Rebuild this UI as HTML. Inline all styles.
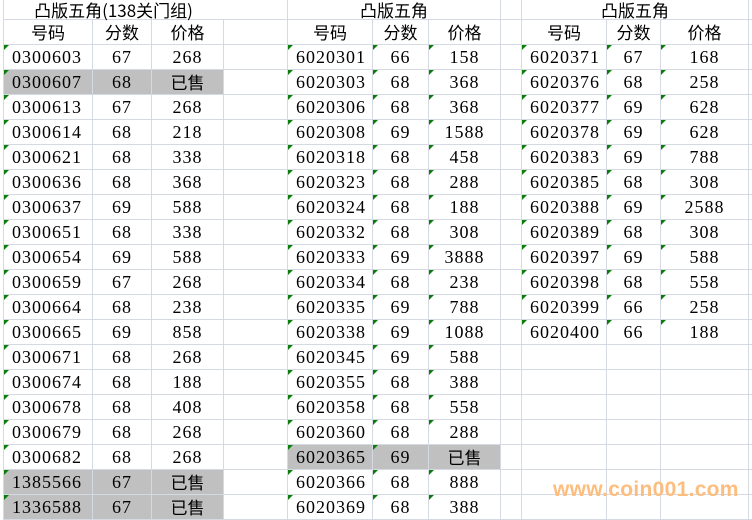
<!DOCTYPE html>
<html><head><meta charset="utf-8"><style>
body{margin:0;width:752px;height:519px;overflow:hidden;background:#fff;position:relative}
table{position:absolute;left:3px;top:-1px;width:775px;border-collapse:collapse;table-layout:fixed;font-family:"Liberation Serif","Noto Sans CJK SC",serif;font-size:18px;color:#000;letter-spacing:1px}
td{border:1px solid #d4d9e4;height:24px;padding:0;text-align:center;white-space:nowrap;overflow:visible;position:relative;line-height:24px}
tr.t td{height:19px;line-height:19px}
td.c{text-align:left;padding-left:8px}
td.g::before{content:"";position:absolute;left:0;top:0;border-top:5px solid #0a7d0a;border-right:5px solid transparent}
.h{font-family:"Noto Sans CJK SC",sans-serif;font-size:17px;letter-spacing:0}
.gr{background:#c0c0c0}
.wm{position:absolute;left:553px;top:478px;font:bold 21px "Liberation Sans",sans-serif;color:#fcbd7e;letter-spacing:0.3px}
</style></head><body>
<table>
<colgroup><col style="width:89px"><col style="width:59px"><col style="width:72px"><col style="width:64px"><col style="width:85px"><col style="width:56px"><col style="width:72px"><col style="width:21px"><col style="width:85px"><col style="width:54px"><col style="width:88px"><col style="width:30px"></colgroup>
<tr class="t"><td colspan="3" class="h" style="border-right-color:transparent">凸版五角(138关门组)</td><td></td><td colspan="3" class="h">凸版五角</td><td></td><td colspan="3" class="h">凸版五角</td><td></td></tr>
<tr><td class="h">号码</td><td class="h">分数</td><td class="h">价格</td><td></td><td class="h">号码</td><td class="h">分数</td><td class="h">价格</td><td></td><td class="h">号码</td><td class="h">分数</td><td class="h">价格</td><td></td></tr>
<tr><td class="c g">0300603</td><td>67</td><td>268</td><td></td><td class="c g">6020301</td><td class="g">66</td><td class="g">158</td><td></td><td class="c g">6020371</td><td class="g">67</td><td class="g">168</td><td></td></tr>
<tr><td class="c g gr">0300607</td><td class="gr">68</td><td class="gr h">已售</td><td></td><td class="c g">6020303</td><td class="g">68</td><td class="g">368</td><td></td><td class="c g">6020376</td><td class="g">68</td><td class="g">258</td><td></td></tr>
<tr><td class="c g">0300613</td><td>67</td><td>268</td><td></td><td class="c g">6020306</td><td class="g">68</td><td class="g">368</td><td></td><td class="c g">6020377</td><td class="g">69</td><td class="g">628</td><td></td></tr>
<tr><td class="c g">0300614</td><td>68</td><td>218</td><td></td><td class="c g">6020308</td><td class="g">69</td><td class="g">1588</td><td></td><td class="c g">6020378</td><td class="g">69</td><td class="g">628</td><td></td></tr>
<tr><td class="c g">0300621</td><td>68</td><td>338</td><td></td><td class="c g">6020318</td><td class="g">68</td><td class="g">458</td><td></td><td class="c g">6020383</td><td class="g">69</td><td class="g">788</td><td></td></tr>
<tr><td class="c g">0300636</td><td>68</td><td>368</td><td></td><td class="c g">6020323</td><td class="g">68</td><td class="g">288</td><td></td><td class="c g">6020385</td><td class="g">68</td><td class="g">308</td><td></td></tr>
<tr><td class="c g">0300637</td><td>69</td><td>588</td><td></td><td class="c g">6020324</td><td class="g">68</td><td class="g">188</td><td></td><td class="c g">6020388</td><td class="g">69</td><td class="g">2588</td><td></td></tr>
<tr><td class="c g">0300651</td><td>68</td><td>338</td><td></td><td class="c g">6020332</td><td class="g">68</td><td class="g">308</td><td></td><td class="c g">6020389</td><td class="g">68</td><td class="g">308</td><td></td></tr>
<tr><td class="c g">0300654</td><td>69</td><td>588</td><td></td><td class="c g">6020333</td><td class="g">69</td><td class="g">3888</td><td></td><td class="c g">6020397</td><td class="g">69</td><td class="g">588</td><td></td></tr>
<tr><td class="c g">0300659</td><td>67</td><td>268</td><td></td><td class="c g">6020334</td><td class="g">68</td><td class="g">238</td><td></td><td class="c g">6020398</td><td class="g">68</td><td class="g">558</td><td></td></tr>
<tr><td class="c g">0300664</td><td>68</td><td>238</td><td></td><td class="c g">6020335</td><td class="g">69</td><td class="g">788</td><td></td><td class="c g">6020399</td><td class="g">66</td><td class="g">258</td><td></td></tr>
<tr><td class="c g">0300665</td><td>69</td><td>858</td><td></td><td class="c g">6020338</td><td class="g">69</td><td class="g">1088</td><td></td><td class="c g">6020400</td><td class="g">66</td><td class="g">188</td><td></td></tr>
<tr><td class="c g">0300671</td><td>68</td><td>268</td><td></td><td class="c g">6020345</td><td class="g">69</td><td class="g">588</td><td></td><td></td><td></td><td></td><td></td></tr>
<tr><td class="c g">0300674</td><td>68</td><td>188</td><td></td><td class="c g">6020355</td><td class="g">68</td><td class="g">388</td><td></td><td></td><td></td><td></td><td></td></tr>
<tr><td class="c g">0300678</td><td>68</td><td>408</td><td></td><td class="c g">6020358</td><td class="g">68</td><td class="g">558</td><td></td><td></td><td></td><td></td><td></td></tr>
<tr><td class="c g">0300679</td><td>68</td><td>268</td><td></td><td class="c g">6020360</td><td class="g">68</td><td class="g">288</td><td></td><td></td><td></td><td></td><td></td></tr>
<tr><td class="c g">0300682</td><td>68</td><td>268</td><td></td><td class="c g gr">6020365</td><td class="g gr">69</td><td class="gr h">已售</td><td></td><td></td><td></td><td></td><td></td></tr>
<tr><td class="c g gr">1385566</td><td class="gr">67</td><td class="gr h">已售</td><td></td><td class="c g">6020366</td><td class="g">68</td><td class="g">888</td><td></td><td></td><td></td><td></td><td></td></tr>
<tr><td class="c g gr">1336588</td><td class="gr">67</td><td class="gr h">已售</td><td></td><td class="c g">6020369</td><td class="g">68</td><td class="g">388</td><td></td><td></td><td></td><td></td><td></td></tr>
</table>
<div class="wm">www.coin001.com</div>
</body></html>
